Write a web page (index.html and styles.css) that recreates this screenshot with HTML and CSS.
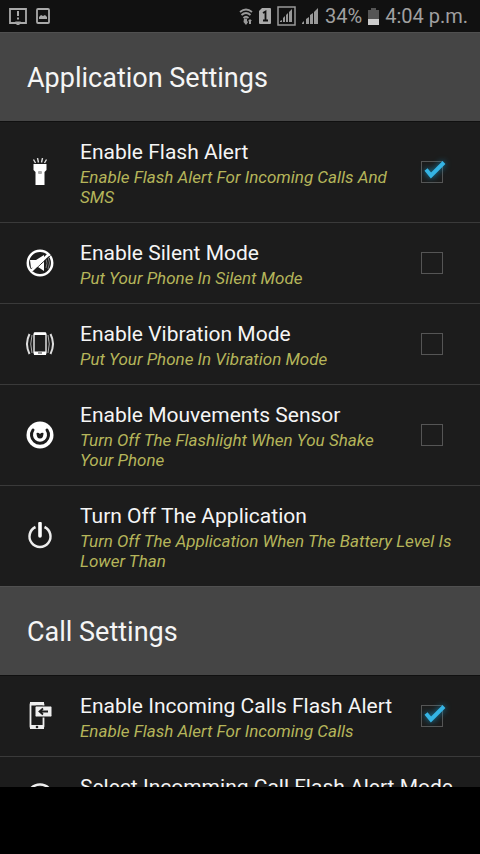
FILE: index.html
```html
<!DOCTYPE html>
<html lang="en">
<head>
<meta charset="utf-8">
<meta name="viewport" content="width=device-width, initial-scale=1">
<title>Application Settings</title>
<link rel="stylesheet" href="styles.css">
</head>
<body>
<header class="status">
  <div class="status-group notices">
    <svg width="18" height="17" viewBox="0 0 18 17"><path d="M1 1h16v14h-6l-2 1.500-2-1.500H1z" fill="none" stroke="#aaa" stroke-width="1.800"/><path d="M8 3h2v5H8zM8 9.500h2v2H8z" fill="#aaa"/><path d="M6 13.500h6L9 16z" fill="#aaa"/></svg>
    <svg width="14" height="16" viewBox="0 0 14 16"><rect x="1" y="1" width="12" height="14" rx="1" fill="none" stroke="#aaa" stroke-width="1.800"/><path d="M3 11V9l2-2 2 1 2-1 2 2v2z" fill="#aaa"/></svg>
  </div>
  <div class="status-group">
    <svg width="14" height="18" viewBox="0 0 14 18"><g fill="none" stroke="#999" stroke-width="1.800"><path d="M1 5q6-5 12 0M2.500 8q4.500-4 9 0M4.500 11q2.500-2.500 5 0"/></g><path d="M5 11.500h3v3h1.500L7 18l-2.500-3zM9 14l2-2 2 2h-1v3h-2v-3z" fill="#999"/></svg>
    <svg width="12" height="16" viewBox="0 0 12 16"><path d="M3 0h8q1 0 1 1v14q0 1-1 1H1q-1 0-1-1V3z" fill="#aaa"/><path d="M4 5l2.500-1.500V13M4 12.500h5" fill="none" stroke="#111" stroke-width="1.800"/></svg>
    <svg width="19" height="20" viewBox="0 0 19 20"><rect x="1" y="1" width="17" height="18" fill="none" stroke="#999" stroke-width="1.500"/><path d="M3 16v-1l2-1v2zM6 16v-4l2-2v6zM9 16V9l2-2v9zM12 16V6l3-3v13z" fill="#999"/></svg>
    <svg width="17" height="17" viewBox="0 0 17 17"><path d="M0 16v-1l2-2v3zM4 16v-5l3-2v7zM8 16V7l3-2v11zM12 16V4l4-4v16z" fill="#999"/></svg>
    <span>34%</span>
    <svg width="11" height="17" viewBox="0 0 11 17"><path d="M3 0h5v2h3v9H0V2h3z" fill="#555"/><path d="M0 11h11v6H0z" fill="#ccc"/></svg>
    <time>4:04 p.m.</time>
  </div>
</header>
<main class="settings">
  <h2 class="section">Application Settings</h2>
  <label class="row">
    <svg class="icon" viewBox="0 0 28 28"><g fill="none" stroke="#ddd" stroke-width="1.400"><path d="M7.500 1.500l2 3.500M11.500 0l1 4.500M16.500 0l-1 4.500M20.500 1.500l-2 3.500"/></g><path d="M7.500 6h13v6l-2 2v13h-9V14l-2-2z" fill="#fff"/><rect x="12" y="13" width="4" height="3" rx="1" fill="#aaa"/></svg>
    <span class="text"><span class="title">Enable Flash Alert</span><span class="desc">Enable Flash Alert For Incoming Calls And SMS</span></span>
    <span class="box"><input type="checkbox" checked><svg class="tick" viewBox="0 0 34 34"><path d="M11 14.500l5 6L29 7.500" fill="none" stroke="#35b4e4" stroke-width="4"/></svg></span>
  </label>
  <label class="row">
    <svg class="icon" viewBox="0 0 28 28"><circle cx="14" cy="14" r="12.200" fill="none" stroke="#fff" stroke-width="2.500"/><path d="M4 11h6l8-5v16l-6-4-7 1z" fill="#fff"/><path d="M20 10q2 4 0 9M22 8q3 6 0 12" fill="none" stroke="#777"/><path d="M6.500 22.500L24.500 6.500" stroke="#1c1c1c" stroke-width="1"/><path d="M5 22L23 5" stroke="#fff" stroke-width="2.500"/></svg>
    <span class="text"><span class="title">Enable Silent Mode</span><span class="desc">Put Your Phone In Silent Mode</span></span>
    <span class="box"><input type="checkbox"></span>
  </label>
  <label class="row">
    <svg class="icon" viewBox="0 0 28 28"><g fill="none" stroke="#ddd"><rect x="8" y="3" width="12" height="21" rx="1.500" stroke-width="1.500"/><path d="M6 5q-2.500 9 0 18M22 5q2.500 9 0 18" stroke="#aaa" stroke-width="1"/><path d="M3.500 4q-5 10 0 20M24.500 4q5 10 0 20" stroke-width="2"/></g><path d="M8 2.500h12V5H8zM8 21.500h12V25H8z" fill="#fff"/><path d="M12 23h4" stroke="#333"/></svg>
    <span class="text"><span class="title">Enable Vibration Mode</span><span class="desc">Put Your Phone In Vibration Mode</span></span>
    <span class="box"><input type="checkbox"></span>
  </label>
  <label class="row">
    <svg class="icon" viewBox="0 0 28 28"><circle cx="14" cy="14" r="13.500" fill="#fff"/><path d="M7 9a8.500 8.500 0 1 0 14 0" fill="none" stroke="#1c1c1c" stroke-width="3" stroke-linecap="round"/><path d="M10.500 12q0 5.500 3.500 5.500t3.500-5.500q-2-1-3.500 1-1.500-2-3.500-1z" fill="#1c1c1c"/></svg>
    <span class="text"><span class="title">Enable Mouvements Sensor</span><span class="desc">Turn Off The Flashlight When You Shake Your Phone</span></span>
    <span class="box"><input type="checkbox"></span>
  </label>
  <a class="row" href="#battery">
    <svg class="icon" viewBox="0 0 28 28"><path d="M9.500 5a10.500 10.500 0 1 0 9 0" fill="none" stroke="#eee" stroke-width="2.500"/><path d="M14 1.500V14" stroke="#fff" stroke-width="3.600" stroke-linecap="round"/></svg>
    <span class="text"><span class="title">Turn Off The Application</span><span class="desc">Turn Off The Application When The Battery Level Is Lower Than</span></span>
  </a>
  <h2 class="section">Call Settings</h2>
  <label class="row">
    <svg class="icon" viewBox="0 0 28 28"><rect x="4.500" y="1" width="13" height="25" rx="1.500" fill="none" stroke="#eee" stroke-width="1.800"/><path d="M4 0h14v3.500H4zM4 23h14v4H4z" fill="#eee"/><circle cx="11" cy="25" r="1.300" fill="#222"/><rect x="9" y="4" width="17" height="11" rx="1.500" fill="#eee" stroke="#1c1c1c"/><path d="M22 9.500h-8M17 6.500l-3.500 3 3.500 3" fill="none" stroke="#1c1c1c" stroke-width="1.800"/></svg>
    <span class="text"><span class="title">Enable Incoming Calls Flash Alert</span><span class="desc">Enable Flash Alert For Incoming Calls</span></span>
    <span class="box"><input type="checkbox" checked><svg class="tick" viewBox="0 0 34 34"><path d="M11 14.500l5 6L29 7.500" fill="none" stroke="#35b4e4" stroke-width="4"/></svg></span>
  </label>
  <a class="row row-tall" href="#mode">
    <svg class="icon" viewBox="0 0 28 28"><circle cx="14" cy="14" r="12.500" fill="none" stroke="#eee" stroke-width="2.500"/></svg>
    <span class="text"><span class="title">Select Incomming Call Flash Alert Mode</span></span>
  </a>
</main>
<footer class="bottom"></footer>
</body>
</html>
```
FILE: styles.css
```css
* { box-sizing: border-box; }

body {
  margin: 0;
  height: 100vh;
  display: flex;
  flex-direction: column;
  overflow: hidden;
  background: #000;
  color: #f5f5f5;
  font-family: Roboto, "Noto Sans", sans-serif;
}

svg { display: block; flex: none; }

.status {
  flex: none;
  height: 32px;
  padding: 0 12px 0 9px;
  display: flex;
  align-items: center;
  justify-content: space-between;
  background: #111;
  color: #a0a0a0;
  font-size: 20px;
  line-height: 32px;
}

.status-group { display: flex; align-items: center; gap: 6px; }
.notices { gap: 9px; }

.settings {
  flex: 1;
  min-height: 0;
  overflow: hidden;
  background: #1c1c1c;
}

.section {
  margin: 0;
  height: 90px;
  padding: 2px 27px 0;
  display: flex;
  align-items: center;
  border-top: 1px solid #505050;
  border-bottom: 1px solid #101010;
  background: #454545;
  font-size: 27px;
  font-weight: 400;
}

.row {
  display: flex;
  align-items: center;
  padding: 15px 16px 15px 26px;
  color: inherit;
  text-decoration: none;
}

.row + .row { border-top: 1px solid #3a3a3a; }

.row-tall { min-height: 81px; }
.row-tall .text { align-self: flex-start; }

.icon { width: 28px; height: 28px; margin-right: 26px; }

.text { flex: 1; min-width: 0; }

.title {
  display: block;
  font-size: 21px;
  line-height: 30px;
  white-space: nowrap;
}

.desc {
  display: block;
  color: #b5b55a;
  font-size: 17px;
  font-style: italic;
  line-height: 20px;
}

.box {
  position: relative;
  flex: none;
  width: 22px;
  height: 22px;
  margin: 0 21px 0 16px;
}

.box input {
  appearance: none;
  display: block;
  width: 22px;
  height: 22px;
  margin: 0;
  border: 1px solid #555;
}

.tick {
  position: absolute;
  left: -6px;
  top: -6px;
  width: 34px;
  height: 34px;
  filter: drop-shadow(0 0 3px #1583ad);
}

.bottom { flex: none; height: 67px; background: #000; }
```
